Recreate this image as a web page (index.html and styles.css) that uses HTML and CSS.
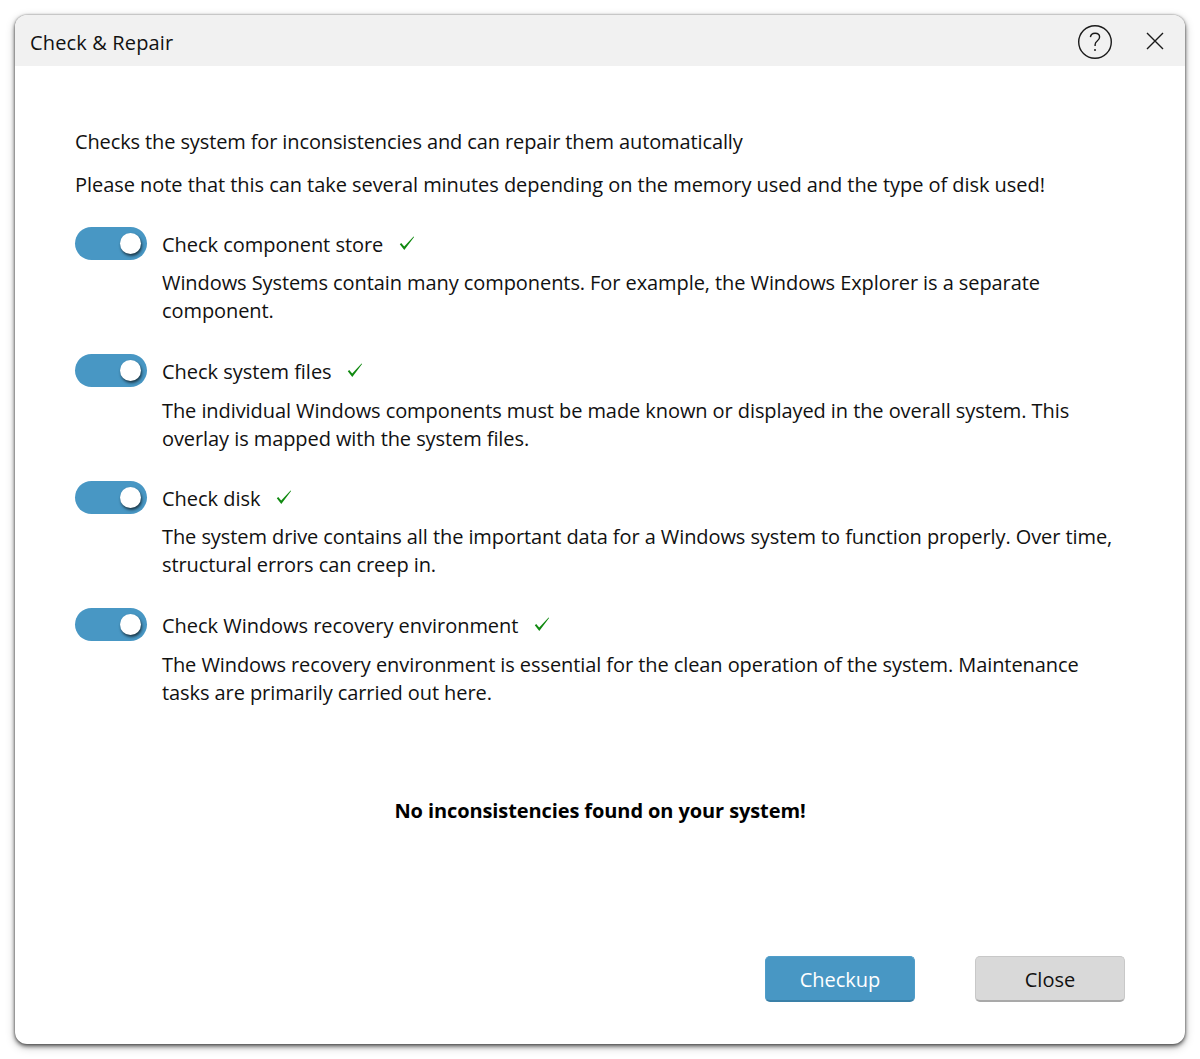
FILE: index.html
```html
<!DOCTYPE html>
<html lang="en">
<head>
  <meta charset="UTF-8" />
  <title>Check &amp; Repair</title>
  <link rel="stylesheet" href="styles.css">
</head>
<body>
  <div class="dialog">
    <div class="titlebar">
      <span class="title">Check &amp; Repair</span>
      <svg class="help-icon" width="36" height="36" viewBox="0 0 36 36">
        <circle cx="18" cy="18" r="16.3" fill="none" stroke="#1a1a1a" stroke-width="1.4"/>
        <path d="M13.4 13.2c.3-2.6 2.200-4 4.700-4 2.600 0 4.500 1.600 4.500 3.900 0 1.900-1 2.900-2.400 3.900-1.500 1.100-2.100 2-2.100 3.700v1.300" fill="none" stroke="#1a1a1a" stroke-width="1.400"/>
        <circle cx="18" cy="26" r="1" fill="#1a1a1a"/>
      </svg>
      <svg class="close-icon" width="18" height="18" viewBox="0 0 18 18">
        <path d="M1 1l16 16M17 1L1 17" fill="none" stroke="#1a1a1a" stroke-width="1.400"/>
      </svg>
    </div>

    <div class="content">
      <p class="intro">Checks the system for inconsistencies and can repair them automatically</p>
      <p class="intro note">Please note that this can take several minutes depending on the memory used and the type of disk used!</p>

      <div class="check-item">
        <div class="toggle"><span class="knob"></span></div>
        <div class="check-body">
          <div class="check-title">Check component store
            <svg class="tick" width="16" height="14" viewBox="0 0 16 14"><path d="M.8 8.200L2.200 7l3 3.600L14.600.4l.5.5L5.300 14z" fill="#118a11"/></svg>
          </div>
          <p class="check-text">Windows Systems contain many components. For example, the Windows Explorer is a separate component.</p>
        </div>
      </div>

      <div class="check-item">
        <div class="toggle"><span class="knob"></span></div>
        <div class="check-body">
          <div class="check-title">Check system files
            <svg class="tick" width="16" height="14" viewBox="0 0 16 14"><path d="M.8 8.200L2.200 7l3 3.600L14.600.4l.5.5L5.300 14z" fill="#118a11"/></svg>
          </div>
          <p class="check-text">The individual Windows components must be made known or displayed in the overall system. This overlay is mapped with the system files.</p>
        </div>
      </div>

      <div class="check-item">
        <div class="toggle"><span class="knob"></span></div>
        <div class="check-body">
          <div class="check-title">Check disk
            <svg class="tick" width="16" height="14" viewBox="0 0 16 14"><path d="M.8 8.200L2.200 7l3 3.600L14.600.4l.5.5L5.300 14z" fill="#118a11"/></svg>
          </div>
          <p class="check-text">The system drive contains all the important data for a Windows system to function properly. Over time, structural errors can creep in.</p>
        </div>
      </div>

      <div class="check-item">
        <div class="toggle"><span class="knob"></span></div>
        <div class="check-body">
          <div class="check-title">Check Windows recovery environment
            <svg class="tick" width="16" height="14" viewBox="0 0 16 14"><path d="M.8 8.200L2.200 7l3 3.600L14.600.4l.5.5L5.300 14z" fill="#118a11"/></svg>
          </div>
          <p class="check-text">The Windows recovery environment is essential for the clean operation of the system. Maintenance tasks are primarily carried out here.</p>
        </div>
      </div>

      <div class="result">No inconsistencies found on your system!</div>

      <div class="buttons">
        <button class="btn btn-primary">Checkup</button>
        <button class="btn btn-default">Close</button>
      </div>
    </div>
  </div>
</body>
</html>
```

FILE: styles.css
```css
* {
  box-sizing: border-box;
}
html, body {
  margin: 0;
  height: 100%;
}
body {
  font-family: "Open Sans", sans-serif;
  font-size: 20px;
  letter-spacing: -0.08px;
  color: #111;
  background-color: #fff;
  padding: 15px;
  overflow: hidden;
}
.dialog {
  width: 1170px;
  height: 1029px;
  background-color: #fff;
  border-radius: 12px;
  box-shadow: 0 2px 4px rgba(0, 0, 0, 0.6), 0 3px 10px rgba(0, 0, 0, 0.25), 0 0 2px rgba(0, 0, 0, 0.4);
  display: flex;
  flex-direction: column;
  overflow: hidden;
}
.titlebar {
  height: 51px;
  background-color: #f1f1f1;
  display: flex;
  align-items: center;
  padding: 0 21px 0 15px;
  flex-shrink: 0;
}
.title {
  flex: 1;
  position: relative;
  top: 2px;
  letter-spacing: 0.15px;
}
.help-icon {
  margin-right: 33px;
  position: relative;
  top: 1px;
}
.content {
  flex: 1;
  display: flex;
  flex-direction: column;
  padding: 60px 60px 42px;
}
.intro {
  margin: 0;
  line-height: 32px;
  letter-spacing: -0.12px;
}
.note {
  margin-top: 11px;
  margin-bottom: 26px;
  letter-spacing: -0.05px;
}
.check-item {
  display: flex;
  gap: 15px;
  margin-bottom: 29px;
}
.toggle {
  width: 72px;
  height: 33px;
  background-color: #4897c4;
  border-radius: 17px;
  flex-shrink: 0;
  position: relative;
}
.knob {
  position: absolute;
  top: 6px;
  right: 6px;
  width: 21px;
  height: 21px;
  background-color: #fff;
  border-radius: 50%;
  box-shadow: 1px 2px 3px rgba(0, 0, 0, 0.65);
}
.check-title {
  line-height: 36px;
  letter-spacing: -0.03px;
}
.tick {
  margin-left: 10px;
  vertical-align: 2px;
}
.check-text {
  margin: 6px 0 0;
  line-height: 28px;
}
.check-item:nth-child(even) {
  margin-bottom: 28px;
}
.check-item:nth-child(even) .check-text {
  margin-top: 7px;
}
.result {
  margin-top: 62px;
  text-align: center;
  font-weight: 700;
  letter-spacing: -0.1px;
  color: #000;
}
.buttons {
  margin-top: auto;
  display: flex;
  justify-content: flex-end;
  gap: 60px;
}
.btn {
  width: 150px;
  height: 46px;
  border-radius: 5px;
  font-family: inherit;
  font-size: 20px;
  padding: 2px 0 0;
}
.btn-primary {
  background-color: #4897c4;
  color: #fff;
  border: 1px solid #4f9dc9;
  border-bottom: 2px solid #3a80a8;
}
.btn-default {
  background-color: #d9d9d9;
  color: #111;
  border: 1px solid #c8c8c8;
  border-bottom: 2px solid #a9a9a9;
}
```
